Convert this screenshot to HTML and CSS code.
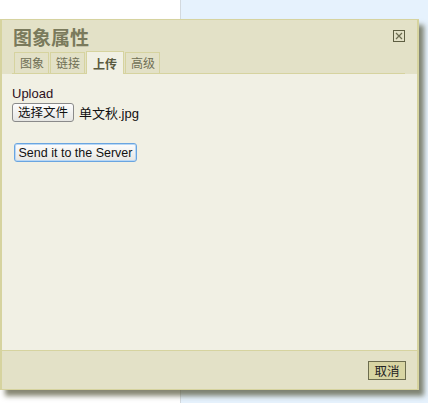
FILE: index.html
```html
<!DOCTYPE html>
<html lang="zh">
<head>
    <meta charset="UTF-8">
    <title>图象属性</title>
    <link rel="stylesheet" href="styles.css">
</head>
<body>

    <!-- Page behind the dialog -->
    <div class="page">
        <div class="page-left"></div>
        <div class="page-right"></div>
    </div>

    <!-- Image properties dialog -->
    <div class="dialog">
        <div class="dlg-head">
            <div class="dlg-title-row">
                <h1 class="dlg-title">图象属性</h1>
                <span class="dlg-close">
                    <svg width="12" height="12" viewBox="0 0 12 12">
                        <rect x="0.5" y="0.5" width="11" height="11" fill="none" stroke="#5e5e42"/>
                        <path d="M3 3 L9 9 M9 3 L3 9" stroke="#6c6c50" stroke-width="1.2"/>
                    </svg>
                </span>
            </div>
            <ul class="tabs">
                <li class="tab">图象</li>
                <li class="tab">链接</li>
                <li class="tab active">上传</li>
                <li class="tab">高级</li>
            </ul>
        </div>

        <div class="dlg-body">
            <div class="field-label">Upload</div>
            <div class="file-row">
                <button class="btn file-btn">选择文件</button>
                <span class="file-name">单文秋.jpg</span>
            </div>
            <button class="btn send-btn">Send it to the Server</button>
        </div>

        <div class="dlg-foot">
            <button class="cancel-btn">取消</button>
        </div>
    </div>

</body>
</html>
```

FILE: styles.css
```css
/* Base page */
body {
    margin: 0;
    padding: 0;
    font-family: 'Liberation Sans', Arial, 'Noto Sans CJK SC', sans-serif;
    font-size: 13px;
    color: #222;
}

.page {
    display: grid;
    grid-template-columns: 181px 1fr;
    height: 403px;
}

.page-left {
    background: #fff;
    border-right: 1px solid #d3d9de;
}

.page-right {
    background: #e6f2fd;
}

/* Dialog frame */
.dialog {
    position: absolute;
    left: 0;
    top: 19px;
    width: 419px;
    height: 371px;
    box-sizing: border-box;
    border: 2px solid #d6d39f;
    border-top-width: 1px;
    border-bottom-width: 1px;
    display: flex;
    flex-direction: column;
    background: #e3e1c7;
    box-shadow: 5px 6px 5px rgba(70, 70, 40, 0.65);
}

.dlg-head {
    padding: 0 12px 0 10px;
}

.dlg-title-row {
    display: flex;
    justify-content: space-between;
    align-items: flex-start;
    height: 31px;
}

.dlg-title {
    margin: 3px 0 0 1px;
    font-family: 'Noto Sans CJK SC', sans-serif;
    font-size: 19px;
    line-height: 27px;
    font-weight: bold;
    color: #7a7a5c;
}

.dlg-close {
    margin-top: 10px;
    width: 12px;
    height: 12px;
    display: block;
}

.dlg-close svg {
    display: block;
}

/* Tabs */
.tabs {
    list-style: none;
    margin: 0;
    padding: 0 0 0 2px;
    display: flex;
    align-items: flex-end;
    gap: 1px;
    border-bottom: 1px solid #d6d39f;
    height: 22px;
}

.tab {
    height: 20px;
    padding: 0 4px 0 5px;
    border: 1px solid #d6d39f;
    border-bottom: none;
    font-family: 'Noto Sans CJK SC', sans-serif;
    font-size: 12px;
    line-height: 20px;
    color: #6f6f55;
    background: #e3e1c7;
}

.tab.active {
    height: 22px;
    line-height: 23px;
    margin-bottom: -1px;
    background: #f1f0e4;
    font-weight: bold;
    color: #5a5a40;
    padding: 0 6px;
}

/* Body */
.dlg-body {
    flex: 1;
    background: #f1f0e4;
    padding: 12px 10px 0 10px;
}

.field-label {
    line-height: 15px;
    color: #2d0f22;
}

.file-row {
    display: flex;
    align-items: center;
    gap: 5px;
    margin-top: 2px;
}

.btn {
    font-family: 'Liberation Sans', Arial, 'Noto Sans CJK SC', sans-serif;
    font-size: 12.5px;
    color: #111;
    background: linear-gradient(#fdfdfd, #e6e6e3);
    border: 1px solid #8a8a8a;
    border-radius: 3px;
    padding: 0;
}

.file-btn {
    width: 62px;
    height: 19px;
    line-height: 16px;
}

.file-name {
    color: #111;
}

.send-btn {
    margin: 21px 0 0 2px;
    width: 123px;
    height: 19px;
    line-height: 16px;
    border: 1px solid #6aa5e0;
    box-shadow: inset 0 0 0 1px #b8d7f5;
}

/* Footer */
.dlg-foot {
    height: 38px;
    border-top: 1px solid #d6d39f;
    display: flex;
    justify-content: flex-end;
    align-items: flex-start;
    padding-right: 11px;
}

.cancel-btn {
    margin-top: 10px;
    width: 38px;
    height: 19px;
    padding: 0;
    border: 1px solid #6c6c4e;
    background: #d8d5a3;
    font-family: 'Noto Sans CJK SC', sans-serif;
    font-size: 12.5px;
    line-height: 16px;
    color: #222;
}
```
